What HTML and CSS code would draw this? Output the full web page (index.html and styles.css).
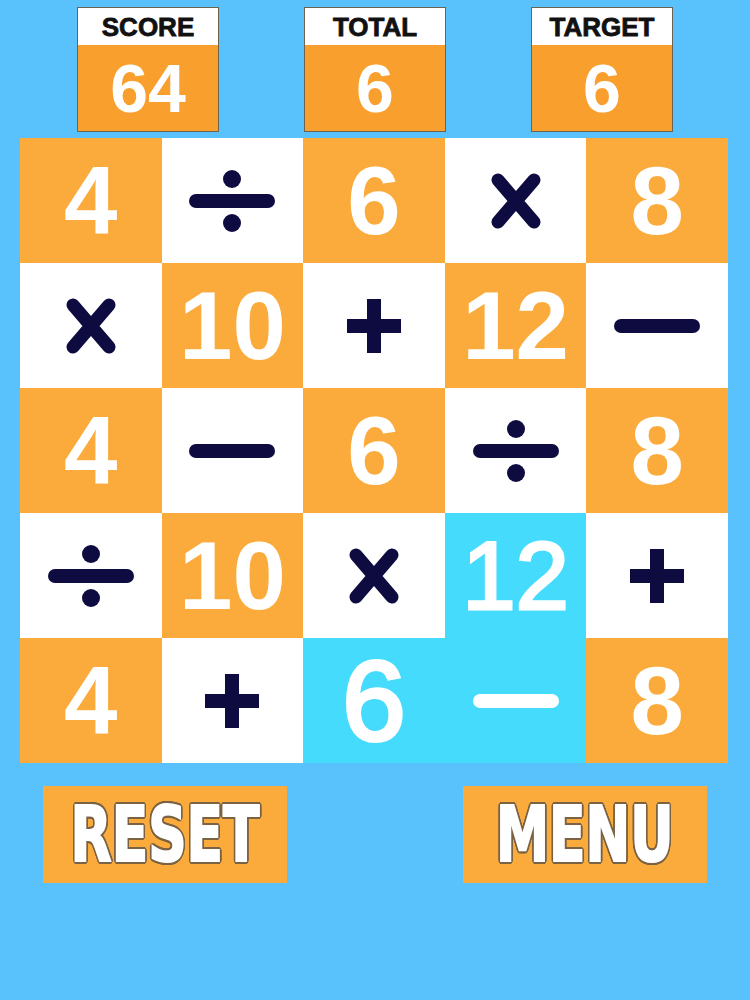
FILE: index.html
```html
<!DOCTYPE html>
<html lang="en">
<head>
<meta charset="utf-8">
<title>Math Grid</title>
<link rel="stylesheet" href="styles.css">
</head>
<body>
<div class="page">
  <div class="stats">
    <div class="stat"><div class="stat-label">SCORE</div><div class="stat-value">64</div></div>
    <div class="stat"><div class="stat-label">TOTAL</div><div class="stat-value">6</div></div>
    <div class="stat"><div class="stat-label">TARGET</div><div class="stat-value">6</div></div>
  </div>

  <div class="board">
    <!-- row 1 -->
    <div class="cell orange"><span class="num">4</span></div>
    <div class="cell white"><svg class="op-div" viewBox="0 0 86 62"><circle cx="43" cy="9" r="9"/><rect x="0" y="24" width="86" height="14" rx="7"/><circle cx="43" cy="53" r="9"/></svg></div>
    <div class="cell orange"><span class="num">6</span></div>
    <div class="cell white"><svg class="op-x" viewBox="0 0 50 56"><path d="M7 7 L43 49 M43 7 L7 49"/></svg></div>
    <div class="cell orange"><span class="num">8</span></div>
    <!-- row 2 -->
    <div class="cell white"><svg class="op-x" viewBox="0 0 50 56"><path d="M7 7 L43 49 M43 7 L7 49"/></svg></div>
    <div class="cell orange"><span class="num">10</span></div>
    <div class="cell white"><svg class="op-plus" viewBox="0 0 54 54"><rect x="0" y="20" width="54" height="14"/><rect x="20" y="0" width="14" height="54"/></svg></div>
    <div class="cell orange"><span class="num">12</span></div>
    <div class="cell white"><svg class="op-minus" viewBox="0 0 86 14"><rect x="0" y="0" width="86" height="14" rx="7"/></svg></div>
    <!-- row 3 -->
    <div class="cell orange"><span class="num">4</span></div>
    <div class="cell white"><svg class="op-minus" viewBox="0 0 86 14"><rect x="0" y="0" width="86" height="14" rx="7"/></svg></div>
    <div class="cell orange"><span class="num">6</span></div>
    <div class="cell white"><svg class="op-div" viewBox="0 0 86 62"><circle cx="43" cy="9" r="9"/><rect x="0" y="24" width="86" height="14" rx="7"/><circle cx="43" cy="53" r="9"/></svg></div>
    <div class="cell orange"><span class="num">8</span></div>
    <!-- row 4 -->
    <div class="cell white"><svg class="op-div" viewBox="0 0 86 62"><circle cx="43" cy="9" r="9"/><rect x="0" y="24" width="86" height="14" rx="7"/><circle cx="43" cy="53" r="9"/></svg></div>
    <div class="cell orange"><span class="num">10</span></div>
    <div class="cell white"><svg class="op-x" viewBox="0 0 50 56"><path d="M7 7 L43 49 M43 7 L7 49"/></svg></div>
    <div class="cell cyan"><span class="num sel">12</span></div>
    <div class="cell white"><svg class="op-plus" viewBox="0 0 54 54"><rect x="0" y="20" width="54" height="14"/><rect x="20" y="0" width="14" height="54"/></svg></div>
    <!-- row 5 -->
    <div class="cell orange"><span class="num">4</span></div>
    <div class="cell white"><svg class="op-plus" viewBox="0 0 54 54"><rect x="0" y="20" width="54" height="14"/><rect x="20" y="0" width="14" height="54"/></svg></div>
    <div class="cell cyan"><span class="num sel big">6</span></div>
    <div class="cell cyan"><svg class="op-minus light" viewBox="0 0 86 14"><rect x="0" y="0" width="86" height="14" rx="7"/></svg></div>
    <div class="cell orange"><span class="num">8</span></div>
  </div>

  <div class="actions">
    <div class="btn"><span class="btn-text">RESET</span></div>
    <div class="btn"><span class="btn-text">MENU</span></div>
  </div>
</div>
</body>
</html>
```

FILE: styles.css
```css
html, body {
  margin: 0;
  padding: 0;
}

body {
  background: #59c2fc;
  width: 750px;
  height: 1000px;
  overflow: hidden;
  font-family: "Liberation Sans", Arial, sans-serif;
}

.page {
  display: flex;
  flex-direction: column;
}

.stats {
  display: flex;
  justify-content: center;
  gap: 85px;
  padding-top: 7px;
}

.stat {
  width: 140px;
  height: 123px;
  border: 1px solid #6e6250;
  display: flex;
  flex-direction: column;
  background: #f99f2e;
}

.stat-label {
  height: 36px;
  background: #ffffff;
  display: flex;
  align-items: center;
  justify-content: center;
  font-weight: bold;
  font-size: 26px;
  color: #111111;
  -webkit-text-stroke: 0.8px #111111;
  padding-top: 1px;
}

.stat-value {
  flex: 1;
  display: flex;
  align-items: center;
  justify-content: center;
  color: #ffffff;
  font-weight: bold;
  font-size: 68px;
  line-height: 1;
}

.board {
  margin: 6px 22px 0 20px;
  display: grid;
  grid-template-columns: repeat(5, 1fr);
  grid-auto-rows: 125px;
}

.cell {
  display: flex;
  align-items: center;
  justify-content: center;
}

.orange { background: #fbab3c; }
.white { background: #ffffff; }
.cyan { background: #44dbfd; }

.num {
  color: #ffffff;
  font-weight: bold;
  font-size: 96px;
  line-height: 1;
}

.num.sel {
  font-weight: normal;
  -webkit-text-stroke: 3px #ffffff;
}

.num.big {
  font-size: 114px;
  -webkit-text-stroke: 4px #ffffff;
}

svg {
  fill: #0d0b40;
}

.op-div { width: 86px; height: 62px; }
.op-minus { width: 86px; height: 14px; }
.op-plus { width: 54px; height: 54px; }
.op-x { width: 50px; height: 56px; }

.op-x path {
  fill: none;
  stroke: #0d0b40;
  stroke-width: 13;
  stroke-linecap: round;
}

.op-minus.light { fill: #ffffff; }

.actions {
  display: flex;
  justify-content: center;
  gap: 176px;
  margin-top: 23px;
}

.btn {
  width: 244px;
  height: 97px;
  background: #fbab3b;
  display: flex;
  align-items: center;
  justify-content: center;
}

.btn-text {
  display: inline-block;
  font-family: "DejaVu Sans", sans-serif;
  font-stretch: condensed;
  font-weight: bold;
  font-size: 76px;
  line-height: 1;
  color: #ffffff;
  -webkit-text-stroke: 2px #ffffff;
  text-shadow:
    3px 0 0 #7a6242, -3px 0 0 #7a6242, 0 3px 0 #7a6242, 0 -3px 0 #7a6242,
    2.2px 2.2px 0 #7a6242, -2.2px 2.2px 0 #7a6242, 2.2px -2.2px 0 #7a6242, -2.2px -2.2px 0 #7a6242,
    2.8px 1.2px 0 #7a6242, -2.8px 1.2px 0 #7a6242, 2.8px -1.2px 0 #7a6242, -2.8px -1.2px 0 #7a6242,
    1.2px 2.8px 0 #7a6242, -1.2px 2.8px 0 #7a6242, 1.2px -2.8px 0 #7a6242, -1.2px -2.8px 0 #7a6242;
  transform: scaleX(0.78);
}
```
